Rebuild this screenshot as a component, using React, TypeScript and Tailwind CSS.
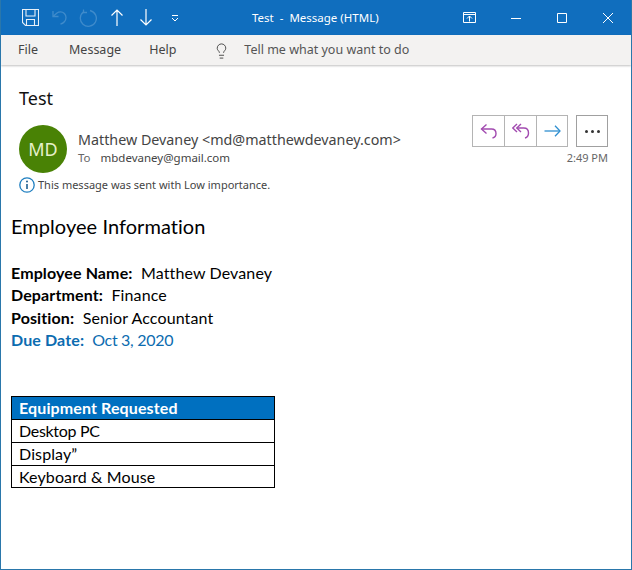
import React from 'react';
import { Lightbulb } from 'lucide-react';

const SaveIcon = () => (
  <svg width="17" height="17" viewBox="0 0 17 17" fill="none" stroke="#e8f0f8" strokeWidth="1.100">
    <path d="M.5.500h16v16h-13l-3-3z" />
    <path d="M4 .5v6.500h9V.5" />
    <path d="M4.500 16.500v-6h8v6" />
  </svg>
);

const UndoIcon = () => (
  <svg width="15" height="16" viewBox="0 0 15 16" fill="none" stroke="#3f8bcb" strokeWidth="1.300">
    <path d="M1 1v5.500h5.500" />
    <path d="M1 6.500 5 3c1-.8 2.200-1.200 3.500-1.200 3 0 5.500 2.500 5.500 5.700 0 3.200-2.500 6-5.500 6.500" />
  </svg>
);

const RedoIcon = () => (
  <svg width="18" height="18" viewBox="0 0 18 18" fill="none" stroke="#3f8bcb" strokeWidth="1.300">
    <path d="M5 2.600A8 8 0 1 0 11 1.500" />
    <path d="M4.500 .5v3h3.500" />
  </svg>
);

const UpIcon = () => (
  <svg width="12" height="17" viewBox="0 0 12 17" fill="none" stroke="#ffffff" strokeWidth="1.200">
    <path d="M6 1v16M.5 6.500 6 1l5.500 5.500" />
  </svg>
);

const DownIcon = () => (
  <svg width="12" height="17" viewBox="0 0 12 17" fill="none" stroke="#ffffff" strokeWidth="1.200">
    <path d="M6 0v16M.5 10.500 6 16l5.500-5.500" />
  </svg>
);

const RestoreUpIcon = () => (
  <svg width="13" height="11" viewBox="0 0 13 11" fill="none" stroke="#ffffff" strokeWidth="1">
    <path d="M.5.500h12v10H.5z" />
    <path d="M.5 2.500h12" />
    <path d="M6.500 9.500V4M4 6.500 6.500 4 9 6.500" />
  </svg>
);

const MinIcon = () => (
  <svg width="10" height="10" viewBox="0 0 10 10" fill="none" stroke="#ffffff" strokeWidth="1">
    <path d="M0 5.500h10" />
  </svg>
);

const MaxIcon = () => (
  <svg width="10" height="10" viewBox="0 0 10 10" fill="none" stroke="#ffffff" strokeWidth="1">
    <path d="M.5.500h9v9h-9z" />
  </svg>
);

const CloseIcon = () => (
  <svg width="10" height="10" viewBox="0 0 10 10" fill="none" stroke="#ffffff" strokeWidth="1">
    <path d="M0 0l10 10M10 0 0 10" />
  </svg>
);

const ReplyIcon = () => (
  <svg width="18" height="18" viewBox="0 0 18 18" fill="none" stroke="#a24bb0" strokeWidth="1.400">
    <path d="M6.500 2.500 1.500 7l5 4.500" />
    <path d="M1.500 7h10c3 0 4.500 2 4.500 4.500s-1.500 4-3.500 4.500" />
  </svg>
);

const ReplyAllIcon = () => (
  <svg width="18" height="18" viewBox="0 0 18 18" fill="none" stroke="#a24bb0" strokeWidth="1.400">
    <path d="M5 2 .8 6 5 10" />
    <path d="M9 2 4.800 6 9 10" />
    <path d="M4.800 6h7c3 0 4.700 2.200 4.700 5s-1.500 4.500-3.500 5" />
  </svg>
);

const ForwardIcon = () => (
  <svg width="17" height="12" viewBox="0 0 17 12" fill="none" stroke="#2f8fd0" strokeWidth="1.300">
    <path d="M.5 6h15.500" />
    <path d="M11 .8 16 6l-5 5.200" />
  </svg>
);

const InfoIcon = () => (
  <svg width="16" height="16" viewBox="0 0 16 16" fill="none">
    <circle cx="8" cy="8" r="7.200" stroke="#1f7fc0" strokeWidth="1.300" />
    <circle cx="8" cy="4.600" r="1" fill="#1f5f90" />
    <path d="M8 7v5" stroke="#1f5f90" strokeWidth="1.600" />
  </svg>
);

const Label = ({ children }: { children: React.ReactNode }) => (
  <span className="font-bold">{children}</span>
);

export default function App() {
  return (
    <div className="w-[632px] h-[570px] flex flex-col bg-white border-x border-b border-[#2a77ab] overflow-hidden font-['Noto_Sans',sans-serif]">
      {/* title bar */}
      <div className="h-[35px] -mx-px shrink-0 bg-[#106ebe] flex items-center text-white">
        <div className="ml-[22px] flex items-center">
          <SaveIcon />
          <span className="ml-[13px]"><UndoIcon /></span>
          <span className="ml-[12px]"><RedoIcon /></span>
          <span className="ml-[14px]"><UpIcon /></span>
          <span className="ml-[17px]"><DownIcon /></span>
          <svg className="ml-[19px]" width="8" height="8" viewBox="0 0 8 8" fill="none" stroke="#ffffff" strokeWidth="1">
            <path d="M1 1.500h6M1 4l3 3 3-3" />
          </svg>
        </div>
        <span className="ml-[73px] text-[11.5px] whitespace-pre">Test  -  Message (HTML)</span>
        <div className="ml-auto mr-[19px] flex items-center">
          <RestoreUpIcon />
          <span className="ml-[35px]"><MinIcon /></span>
          <span className="ml-[36px]"><MaxIcon /></span>
          <span className="ml-[36px]"><CloseIcon /></span>
        </div>
      </div>

      {/* menu */}
      <div className="h-[30px] pt-[1px] shrink-0 bg-[#f3f2f1] flex items-center text-[12.5px] text-[#444444] shadow-[0_1px_2px_rgba(0,0,0,0.25)]">
        <span className="ml-[17px]">File</span>
        <span className="ml-[31px]">Message</span>
        <span className="ml-[28px]">Help</span>
        <Lightbulb className="ml-[37px] w-[17px] h-[18px] text-[#222222]" strokeWidth={1.1} />
        <span className="ml-[14px] text-[#555555]">Tell me what you want to do</span>
      </div>

      {/* header */}
      <div className="relative px-[18px] pt-[20px] shrink-0">
        <div className="text-[18px] leading-[26px] text-[#111111]">Test</div>
        <div className="mt-[14px] flex items-start">
          <div className="w-[48px] h-[48px] rounded-full bg-[#498205] text-[#e6f0c8] text-[18px] flex items-center justify-center shrink-0">MD</div>
          <div className="ml-[11px]">
            <div className="mt-[5px] text-[14.3px] leading-[20px] text-[#444444]">Matthew Devaney &lt;md@matthewdevaney.com&gt;</div>
            <div className="text-[11.5px] leading-[16px] text-[#444444] flex">
              <span className="text-[#666666]">To</span>
              <span className="ml-[10px]">mbdevaney@gmail.com</span>
            </div>
          </div>
        </div>
        <div className="mt-[4px] flex items-center text-[11px] leading-[16px] text-[#444444]">
          <InfoIcon />
          <span className="ml-[3px]">This message was sent with Low importance.</span>
        </div>

        <div className="absolute right-[23px] top-[50px] flex flex-col items-end">
          <div className="flex items-start">
            <div className="flex h-[32px] border border-[#b4b4b4]">
              <div className="w-[32px] flex items-center justify-center border-r border-[#b4b4b4]"><ReplyIcon /></div>
              <div className="w-[32px] flex items-center justify-center border-r border-[#b4b4b4]"><ReplyAllIcon /></div>
              <div className="w-[30px] flex items-center justify-center"><ForwardIcon /></div>
            </div>
            <div className="ml-[8px] w-[32px] h-[32px] border border-[#a0a0a0] flex items-center justify-center gap-[3px]">
              <span className="w-[3px] h-[3px] rounded-full bg-[#333333]" />
              <span className="w-[3px] h-[3px] rounded-full bg-[#333333]" />
              <span className="w-[3px] h-[3px] rounded-full bg-[#333333]" />
            </div>
          </div>
          <div className="mt-[3px] text-[11px] leading-[16px] text-[#666666]">2:49 PM</div>
        </div>
      </div>

      {/* body */}
      <div className="pl-[10px] mt-[19px] text-black font-['Lato','Noto_Sans',sans-serif]">
        <div className="text-[20px] leading-[28px] tracking-[0.05px]">Employee Information</div>
        <div className="mt-[22px] text-[16px] leading-[22.4px] tracking-[0.12px]">
          <div><Label>Employee Name:</Label>&nbsp; Matthew Devaney</div>
          <div><Label>Department:</Label>&nbsp; Finance</div>
          <div><Label>Position:</Label>&nbsp; Senior Accountant</div>
          <div className="text-[#0c6cb0]"><Label>Due Date:</Label>&nbsp;<span className="tracking-[-0.3px]"> Oct 3, 2020</span></div>
        </div>
        <div className="mt-[44px] w-[264px] border border-black text-[16px] leading-[22px] tracking-[0.12px]">
          <div className="bg-[#0070c0] text-white font-bold pl-[7px] border-b border-black">Equipment Requested</div>
          <div className="pl-[7px] border-b border-black tracking-[-0.3px]">Desktop PC</div>
          <div className="pl-[7px] border-b border-black">Display”</div>
          <div className="pl-[7px] leading-[21px]">Keyboard &amp; Mouse</div>
        </div>
      </div>
    </div>
  );
}
